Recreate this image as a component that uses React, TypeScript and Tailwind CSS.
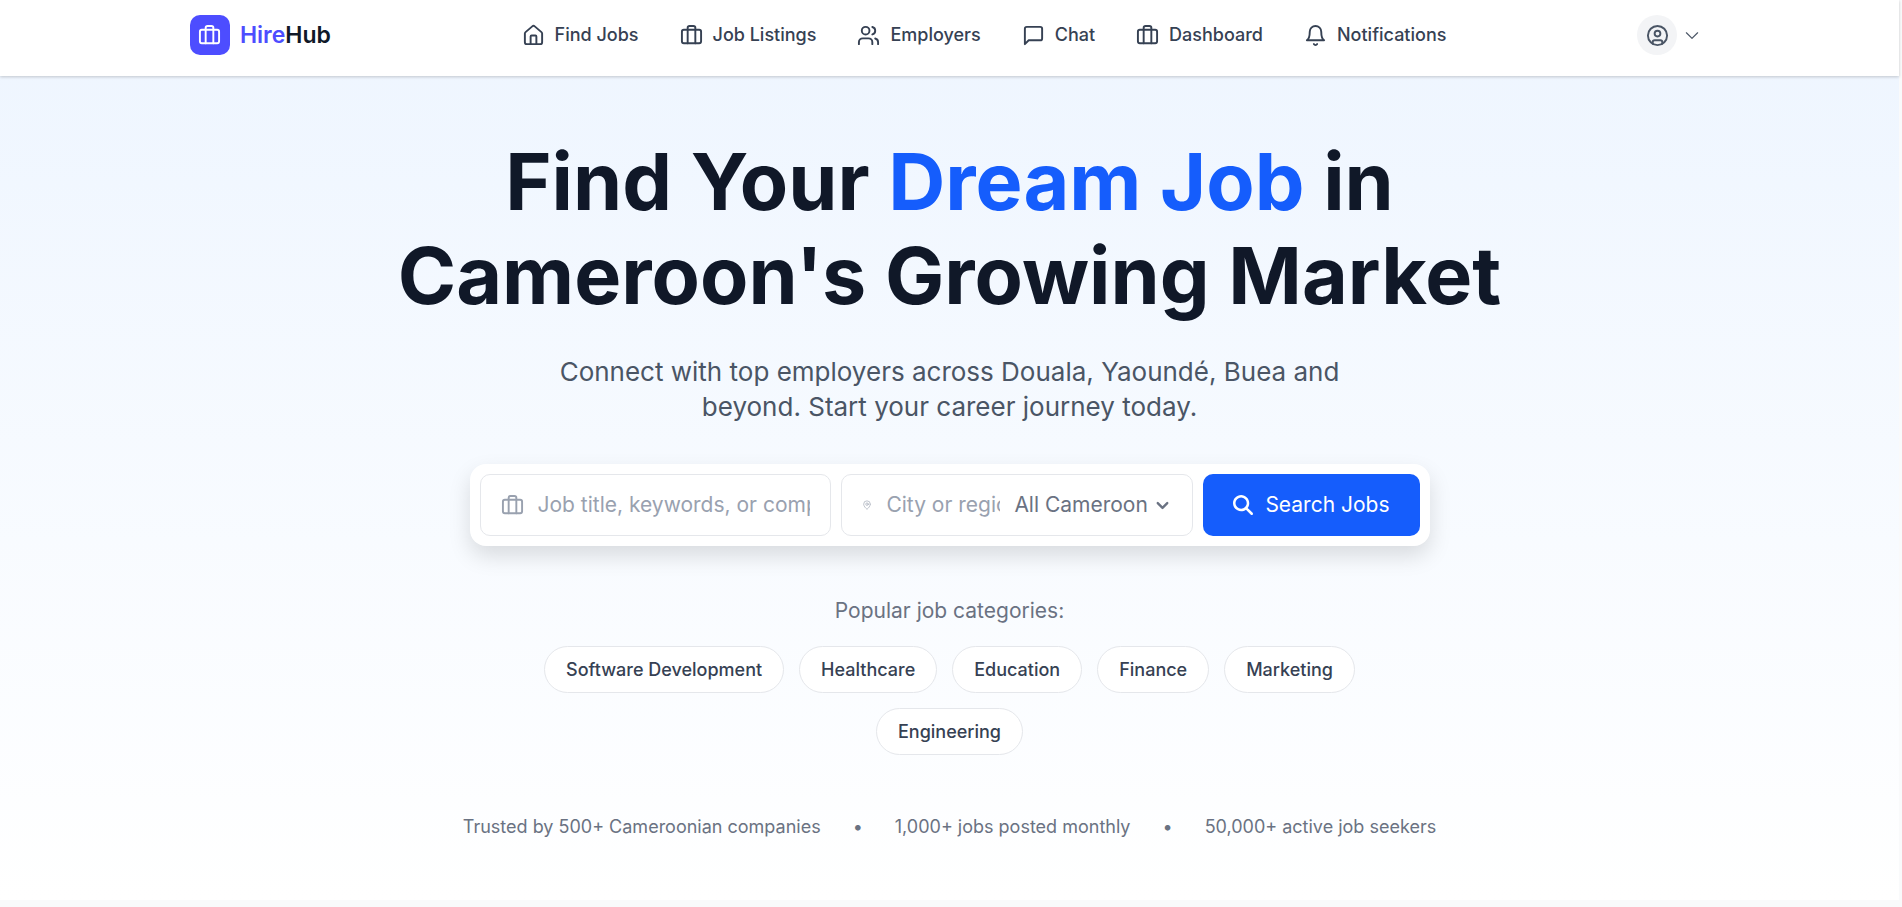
import type { ComponentType } from "react";
import {
  LuBell,
  LuBriefcase,
  LuChevronDown,
  LuCircleUser,
  LuHouse,
  LuMapPin,
  LuMessageSquare,
  LuUsers,
} from "react-icons/lu";
import { FaMagnifyingGlass } from "react-icons/fa6";
import { PiCaretDown } from "react-icons/pi";

type NavItem = { label: string; icon: ComponentType<{ size?: number }> };

const navItems: NavItem[] = [
  { label: "Find Jobs", icon: LuHouse },
  { label: "Job Listings", icon: LuBriefcase },
  { label: "Employers", icon: LuUsers },
  { label: "Chat", icon: LuMessageSquare },
  { label: "Dashboard", icon: LuBriefcase },
  { label: "Notifications", icon: LuBell },
];

const categories = [
  "Software Development",
  "Healthcare",
  "Education",
  "Finance",
  "Marketing",
  "Engineering",
];

const regions = ["All Cameroon", "Douala", "Yaoundé", "Buea"];

function Header() {
  return (
    <header className="relative z-10 flex items-center justify-between bg-white px-[10%] pt-[15px] pb-[21px] shadow-[0_1px_3px_rgba(0,0,0,0.2)]">
      <a href="#" className="flex items-center gap-2.5">
        <span className="flex size-10 items-center justify-center rounded-[10px] bg-[#4d4dff] text-white">
          <LuBriefcase size={23} />
        </span>
        <span className="text-[23px] leading-8 font-semibold text-gray-900">
          <span className="text-[#4d4dff]">Hire</span>Hub
        </span>
      </a>
      <nav className="flex items-center gap-[41px]">
        {navItems.map(({ label, icon: Icon }) => (
          <a
            key={label}
            href="#"
            className="flex items-center gap-2.5 text-[18px] leading-7 font-medium text-gray-700"
          >
            <Icon size={23} />
            {label}
          </a>
        ))}
      </nav>
      <button type="button" aria-label="Account" className="mr-2 flex items-center gap-1.5">
        <span className="flex size-10 items-center justify-center rounded-full bg-gray-100 text-gray-600">
          <LuCircleUser size={23} />
        </span>
        <PiCaretDown size={18} className="text-gray-600" />
      </button>
    </header>
  );
}

function SearchBar() {
  return (
    <form
      className="mx-auto mt-10 flex max-w-[960px] gap-2.5 rounded-2xl bg-white p-2.5 text-[21px] shadow-[0_10px_22px_rgba(0,0,0,0.13)]"
      onSubmit={(e) => e.preventDefault()}
    >
      <label className="flex h-[62px] min-w-0 flex-1 items-center gap-3.5 rounded-[10px] border border-gray-200 px-5">
        <LuBriefcase size={23} className="shrink-0 text-gray-400" />
        <input
          type="text"
          aria-label="Job title, keywords, or company"
          placeholder="Job title, keywords, or company"
          className="min-w-0 flex-1 outline-none placeholder:text-gray-400"
        />
      </label>
      <div className="flex h-[62px] min-w-0 flex-1 items-center gap-3.5 rounded-[10px] border border-gray-200 px-5">
        <LuMapPin size={10} strokeWidth={1.5} className="shrink-0 text-gray-400" />
        <input
          type="text"
          aria-label="City or region"
          placeholder="City or region"
          className="min-w-0 flex-1 outline-none placeholder:text-gray-400"
        />
        <div className="relative flex shrink-0 items-center text-gray-500">
          <select
            aria-label="Region"
            className="appearance-none bg-transparent pr-6 outline-none"
          >
            {regions.map((region) => (
              <option key={region}>{region}</option>
            ))}
          </select>
          <LuChevronDown
            size={19}
            strokeWidth={3}
            className="pointer-events-none absolute right-0"
          />
        </div>
      </div>
      <button
        type="submit"
        className="flex h-[62px] items-center gap-3 rounded-[10px] bg-[#155dfc] px-[30px] text-white"
      >
        <FaMagnifyingGlass size={20} />
        Search Jobs
      </button>
    </form>
  );
}

export default function App() {
  return (
    <div className="min-h-screen bg-[#f9fafb] pr-[3px] font-['Inter','Liberation_Sans',sans-serif]">
      <Header />
      <main className="bg-linear-to-b from-blue-50 to-white px-5 pt-[58px] pb-[59px] text-center">
        <h1 className="mx-auto max-w-[1200px] text-[79px] leading-[94px] font-bold text-gray-900">
          Find Your <span className="text-[#155dfc]">Dream Job</span> in
          <br />
          Cameroon's Growing Market
        </h1>
        <p className="mx-auto mt-8 max-w-[840px] text-[26px] leading-[35px] text-gray-600">
          Connect with top employers across Douala, Yaoundé, Buea and beyond. Start your career
          journey today.
        </p>
        <SearchBar />
        <p className="mt-[49px] text-[21px] leading-8 text-gray-500">Popular job categories:</p>
        <div className="mx-auto mt-[19px] flex max-w-[860px] flex-wrap justify-center gap-[15px]">
          {categories.map((category) => (
            <button
              key={category}
              type="button"
              className="h-[47px] rounded-full border border-gray-200 bg-white px-[21px] text-[18px] font-medium text-gray-700"
            >
              {category}
            </button>
          ))}
        </div>
        <div className="mt-[58px] flex justify-center gap-8 text-[18px] leading-7 text-gray-500">
          <span>Trusted by 500+ Cameroonian companies</span>
          <span>•</span>
          <span>1,000+ jobs posted monthly</span>
          <span>•</span>
          <span>50,000+ active job seekers</span>
        </div>
      </main>
    </div>
  );
}
